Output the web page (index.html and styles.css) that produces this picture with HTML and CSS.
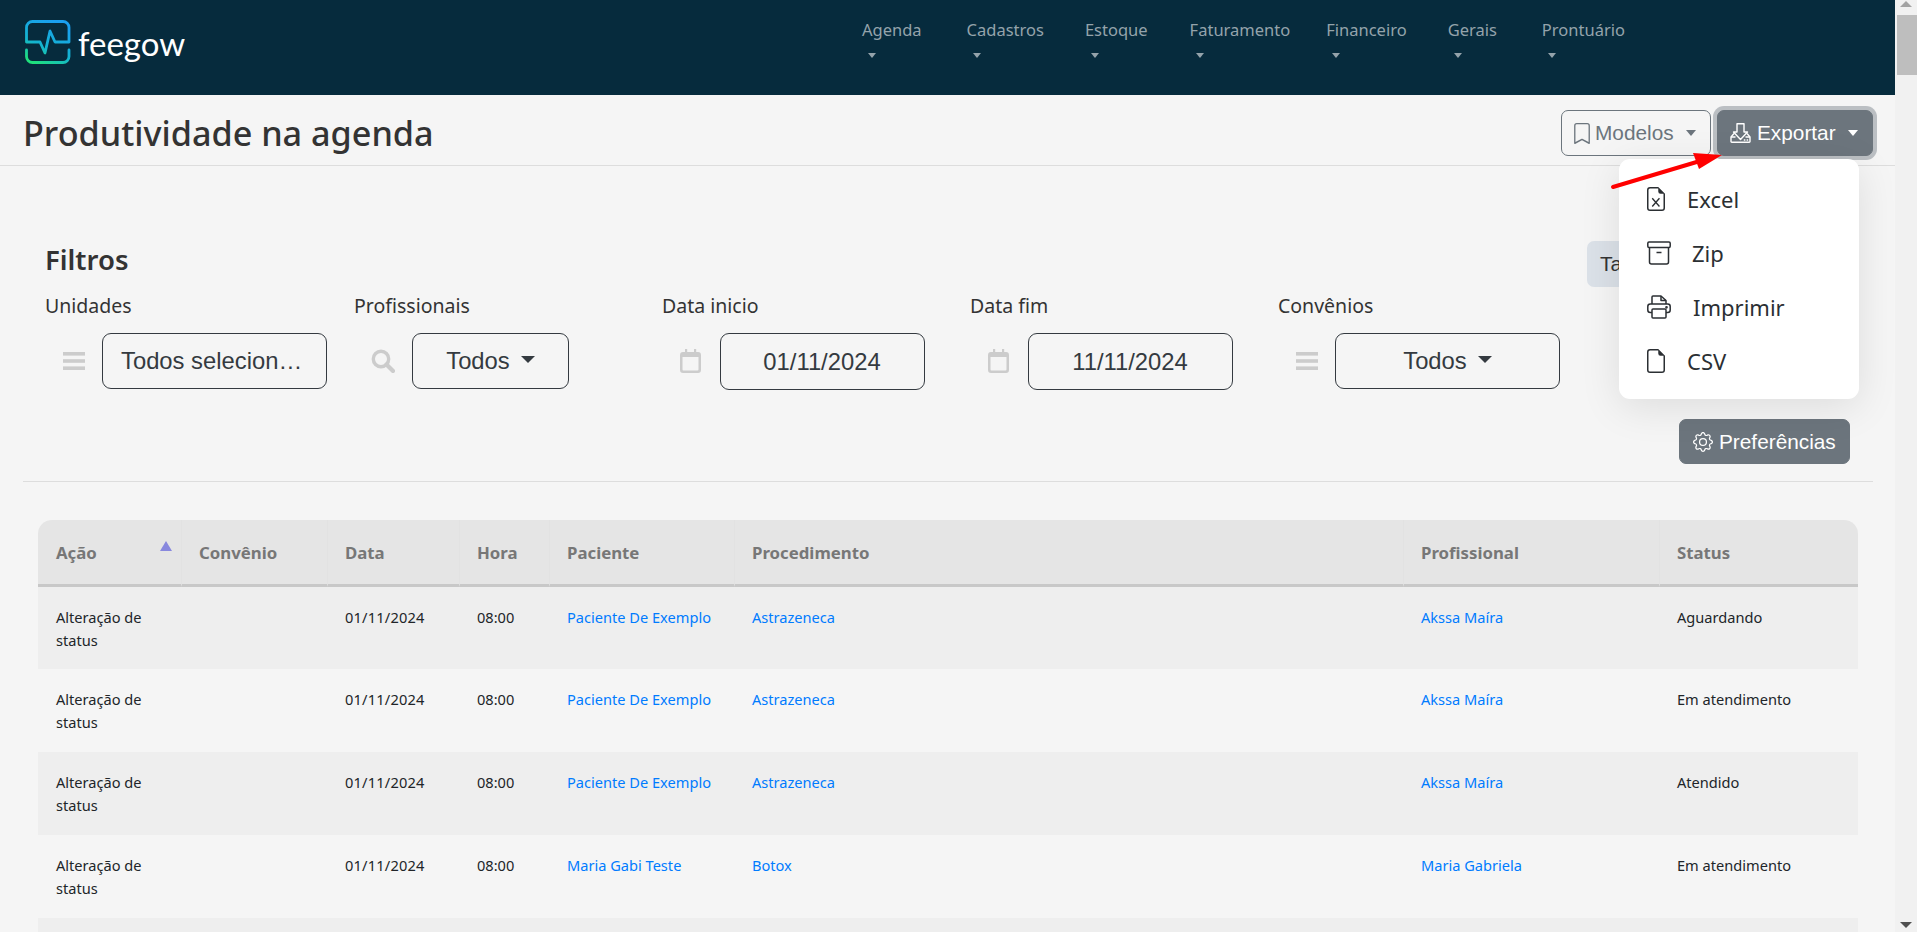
FILE: index.html
```html
<!DOCTYPE html>
<html lang="pt-BR">
<head>
<meta charset="utf-8">
<title>Produtividade na agenda</title>
<link rel="stylesheet" href="styles.css">
</head>
<body>
<div class="page">
  <header class="topbar">
    <a class="logo">
      <svg class="logo-mark" viewBox="0 0 46 44" fill="none" stroke="url(#lg)" stroke-width="2.800" stroke-linecap="round" stroke-linejoin="round">
        <defs><linearGradient id="lg" gradientUnits="userSpaceOnUse" x1="32" y1="2" x2="12" y2="44"><stop offset="0" stop-color="#1a9ff0"/><stop offset=".6" stop-color="#14b4cf"/><stop offset="1" stop-color="#1fe07c"/></linearGradient></defs>
        <path d="M1.500 22V7.500a6 6 0 0 1 6-6H38a6 6 0 0 1 6 6V22H30L25 11 20 33 15 22H1.500z"/>
        <path d="M1.500 30v6.500a6 6 0 0 0 6 6H38a6 6 0 0 0 6-6V30"/>
      </svg>
      <span class="logo-text">feegow</span>
    </a>
    <nav class="nav">
      <a class="nav-item">Agenda<i class="nav-caret"></i></a>
      <a class="nav-item">Cadastros<i class="nav-caret"></i></a>
      <a class="nav-item">Estoque<i class="nav-caret"></i></a>
      <a class="nav-item">Faturamento<i class="nav-caret"></i></a>
      <a class="nav-item">Financeiro<i class="nav-caret"></i></a>
      <a class="nav-item">Gerais<i class="nav-caret"></i></a>
      <a class="nav-item">Prontuário<i class="nav-caret"></i></a>
    </nav>
  </header>

  <section class="title-row">
    <h1 class="title">Produtividade na agenda</h1>
    <div class="actions">
      <button class="btn btn-outline">
        <svg class="ico-book" viewBox="2 0 12 16" fill="currentColor"><path d="M2 2a2 2 0 0 1 2-2h8a2 2 0 0 1 2 2v13.500a.5.5 0 0 1-.777.416L8 13.101l-5.223 2.815A.5.5 0 0 1 2 15.500V2zm2-1a1 1 0 0 0-1 1v12.566l4.723-2.482a.5.5 0 0 1 .554 0L13 14.566V2a1 1 0 0 0-1-1H4z"/></svg>
        Modelos<i class="caret caret-gap"></i>
      </button>
      <div class="export">
        <button class="btn btn-solid btn-focus">
          <svg class="ico-export" viewBox="0 0 21 20" fill="none" stroke="currentColor" stroke-width="1.400" stroke-linejoin="round"><path d="M7 .8h7V9h3.500l-7 7.500-7-7.500H7z"/><path d="M4 10.500L1 14v4.400a.8.8 0 0 0 .8.8h17.400a.8.8 0 0 0 .8-.8V14l-3-3.500"/><path d="M1 14h4.500M15.500 14H20"/><path d="M13.800 17h1.600M16.600 17h1.600"/></svg>
          Exportar<i class="caret caret-gap"></i>
        </button>
        <ul class="menu">
          <li class="menu-item">
            <svg class="ico-file" viewBox="2 0 12 16" fill="currentColor"><path d="M14 4.500V14a2 2 0 0 1-2 2H4a2 2 0 0 1-2-2V2a2 2 0 0 1 2-2h5.500L14 4.500zm-3 0A1.500 1.500 0 0 1 9.500 3V1H4a1 1 0 0 0-1 1v12a1 1 0 0 0 1 1h8a1 1 0 0 0 1-1V4.500h-2z"/><path d="M5.500 7.500l4.800 5.500M10.300 7.500l-4.800 5.500" stroke="currentColor" stroke-width=".9" fill="none"/></svg>
            <span class="menu-label lbl-excel">Excel</span>
          </li>
          <li class="menu-item">
            <svg class="ico-wide" viewBox="0 0 24 24" fill="none" stroke="currentColor" stroke-width="1.500"><rect x=".8" y="1" width="22.400" height="5.500" rx="1.200"/><path d="M2.500 6.500V21a2 2 0 0 0 2 2h15a2 2 0 0 0 2-2V6.500"/><path d="M9.500 11.500h5"/></svg>
            <span class="menu-label lbl-zip">Zip</span>
          </li>
          <li class="menu-item">
            <svg class="ico-wide" viewBox="0 0 24 24" fill="none" stroke="currentColor" stroke-width="1.500" stroke-linejoin="round"><path d="M5 9V2a1 1 0 0 1 1-1h8l5 4.500V9"/><path d="M14 1v4.500h5"/><rect x=".8" y="9" width="22.400" height="8.500" rx="2.500"/><rect x="5" y="14" width="14" height="9" rx="1" fill="#fff"/><circle cx="19.500" cy="12.300" r=".6"/></svg>
            <span class="menu-label lbl-print">Imprimir</span>
          </li>
          <li class="menu-item">
            <svg class="ico-file" viewBox="2 0 12 16" fill="currentColor"><path d="M14 4.500V14a2 2 0 0 1-2 2H4a2 2 0 0 1-2-2V2a2 2 0 0 1 2-2h5.500L14 4.500zm-3 0A1.500 1.500 0 0 1 9.500 3V1H4a1 1 0 0 0-1 1v12a1 1 0 0 0 1 1h8a1 1 0 0 0 1-1V4.500h-2z"/></svg>
            <span class="menu-label lbl-excel">CSV</span>
          </li>
        </ul>
      </div>
    </div>
  </section>

  <section class="filters">
    <div class="filters-head">
      <h2 class="filters-title">Filtros</h2>
      <button class="btn-soft">Tabela</button>
    </div>
    <div class="filter-grid">
      <div class="filter">
        <label class="filter-label">Unidades</label>
        <div class="filter-control">
          <span class="filter-icon"><svg class="ico-bars" viewBox="0 0 22 18" fill="currentColor"><rect width="22" height="3.600"/><rect y="7.200" width="22" height="3.600"/><rect y="14.400" width="22" height="3.600"/></svg></span>
          <div class="field field-lg field-start">Todos selecion…</div>
        </div>
      </div>
      <div class="filter">
        <label class="filter-label">Profissionais</label>
        <div class="filter-control">
          <span class="filter-icon"><svg class="ico-search" viewBox="0 0 24 24" fill="none" stroke="currentColor"><circle cx="10" cy="10" r="7.700" stroke-width="3.400"/><path d="M15.500 15.500l6.500 6.500" stroke-width="4.200" stroke-linecap="round"/></svg></span>
          <div class="field field-sm">Todos<i class="caret caret-lg"></i></div>
        </div>
      </div>
      <div class="filter filter-date">
        <label class="filter-label">Data inicio</label>
        <div class="filter-control">
          <span class="filter-icon"><svg class="ico-cal" viewBox="0 0 21 24" fill="currentColor"><path d="M5 0h2.200v3H14V0h2.200v3H18a3 3 0 0 1 3 3v15a3 3 0 0 1-3 3H3a3 3 0 0 1-3-3V6a3 3 0 0 1 3-3h2zM2.500 8v12.500a1 1 0 0 0 1 1h14a1 1 0 0 0 1-1V8z"/></svg></span>
          <div class="field field-md">01/11/2024</div>
        </div>
      </div>
      <div class="filter filter-date">
        <label class="filter-label">Data fim</label>
        <div class="filter-control">
          <span class="filter-icon"><svg class="ico-cal" viewBox="0 0 21 24" fill="currentColor"><path d="M5 0h2.200v3H14V0h2.200v3H18a3 3 0 0 1 3 3v15a3 3 0 0 1-3 3H3a3 3 0 0 1-3-3V6a3 3 0 0 1 3-3h2zM2.500 8v12.500a1 1 0 0 0 1 1h14a1 1 0 0 0 1-1V8z"/></svg></span>
          <div class="field field-md">11/11/2024</div>
        </div>
      </div>
      <div class="filter">
        <label class="filter-label">Convênios</label>
        <div class="filter-control">
          <span class="filter-icon"><svg class="ico-bars" viewBox="0 0 22 18" fill="currentColor"><rect width="22" height="3.600"/><rect y="7.200" width="22" height="3.600"/><rect y="14.400" width="22" height="3.600"/></svg></span>
          <div class="field field-lg">Todos<i class="caret caret-lg"></i></div>
        </div>
      </div>
    </div>
    <div class="prefs-row">
      <button class="btn btn-solid btn-prefs">
        <svg class="ico-gear" viewBox="0 0 16 16" fill="currentColor"><path d="M8 4.754a3.246 3.246 0 1 0 0 6.492 3.246 3.246 0 0 0 0-6.492zM5.754 8a2.246 2.246 0 1 1 4.492 0 2.246 2.246 0 0 1-4.492 0z"/><path d="M9.796 1.343c-.527-1.790-3.065-1.790-3.592 0l-.094.319a.873.873 0 0 1-1.255.52l-.292-.16c-1.640-.892-3.433.902-2.540 2.541l.159.292a.873.873 0 0 1-.52 1.255l-.319.094c-1.790.527-1.790 3.065 0 3.592l.319.094a.873.873 0 0 1 .52 1.255l-.16.292c-.892 1.640.901 3.434 2.541 2.540l.292-.159a.873.873 0 0 1 1.255.52l.094.319c.527 1.790 3.065 1.790 3.592 0l.094-.319a.873.873 0 0 1 1.255-.52l.292.16c1.640.893 3.434-.902 2.540-2.541l-.159-.292a.873.873 0 0 1 .52-1.255l.319-.094c1.790-.527 1.790-3.065 0-3.592l-.319-.094a.873.873 0 0 1-.52-1.255l.16-.292c.893-1.640-.902-3.433-2.541-2.540l-.292.159a.873.873 0 0 1-1.255-.52l-.094-.319zm-2.633.283c.246-.835 1.428-.835 1.674 0l.094.319a1.873 1.873 0 0 0 2.693 1.115l.291-.16c.764-.415 1.600.42 1.184 1.185l-.159.292a1.873 1.873 0 0 0 1.116 2.692l.318.094c.835.246.835 1.428 0 1.674l-.319.094a1.873 1.873 0 0 0-1.115 2.693l.16.291c.415.764-.42 1.600-1.185 1.184l-.291-.159a1.873 1.873 0 0 0-2.693 1.116l-.094.318c-.246.835-1.428.835-1.674 0l-.094-.319a1.873 1.873 0 0 0-2.692-1.115l-.292.16c-.764.415-1.600-.42-1.184-1.185l.159-.291A1.873 1.873 0 0 0 1.945 8.930l-.319-.094c-.835-.246-.835-1.428 0-1.674l.319-.094A1.873 1.873 0 0 0 3.060 4.377l-.16-.292c-.415-.764.42-1.600 1.185-1.184l.292.159a1.873 1.873 0 0 0 2.692-1.115l.094-.319z"/></svg>
        Preferências
      </button>
    </div>
  </section>

  <hr class="divider">

  <table class="report">
    <colgroup>
      <col class="c1"><col class="c2"><col class="c3"><col class="c4"><col class="c5"><col class="c6"><col class="c7"><col class="c8">
    </colgroup>
    <thead>
      <tr>
        <th class="sorted">Ação<i class="sort-arrow"></i></th>
        <th>Convênio</th><th>Data</th><th>Hora</th><th>Paciente</th><th>Procedimento</th><th>Profissional</th><th>Status</th>
      </tr>
    </thead>
    <tbody>
      <tr class="first">
        <td class="wrap">Alteração de status</td><td></td><td class="date">01/11/2024</td><td>08:00</td>
        <td><a>Paciente De Exemplo</a></td><td><a>Astrazeneca</a></td><td><a>Akssa Maíra</a></td><td>Aguardando</td>
      </tr>
      <tr>
        <td class="wrap">Alteração de status</td><td></td><td class="date">01/11/2024</td><td>08:00</td>
        <td><a>Paciente De Exemplo</a></td><td><a>Astrazeneca</a></td><td><a>Akssa Maíra</a></td><td>Em atendimento</td>
      </tr>
      <tr>
        <td class="wrap">Alteração de status</td><td></td><td class="date">01/11/2024</td><td>08:00</td>
        <td><a>Paciente De Exemplo</a></td><td><a>Astrazeneca</a></td><td><a>Akssa Maíra</a></td><td>Atendido</td>
      </tr>
      <tr>
        <td class="wrap">Alteração de status</td><td></td><td class="date">01/11/2024</td><td>08:00</td>
        <td><a>Maria Gabi Teste</a></td><td><a>Botox</a></td><td><a>Maria Gabriela</a></td><td>Em atendimento</td>
      </tr>
      <tr><td colspan="8"></td></tr>
    </tbody>
  </table>
</div>

<aside class="scrollbar">
  <i class="sb-up"></i>
  <i class="sb-thumb"></i>
  <i class="sb-down"></i>
</aside>

<svg class="red-arrow" viewBox="0 0 120 45">
  <path d="M3 36L90 10" stroke="#f00" stroke-width="4" stroke-linecap="round"/>
  <path d="M112 4L83 2l6 16z" fill="#f00"/>
</svg>
</body>
</html>
```

FILE: styles.css
```css
* { box-sizing: border-box; }
html, body { height: 100%; }
body {
  margin: 0;
  display: flex;
  overflow: hidden;
  position: relative;
  background: #f5f5f5;
  color: #333;
  font-family: "Noto Sans", "Open Sans", sans-serif;
}
.page { flex: 1; min-width: 0; height: 100vh; overflow: hidden; }

/* top bar */
.topbar {
  height: 95px;
  background: #062b3d;
  display: flex;
  align-items: flex-start;
  padding-left: 25px;
}
.logo { display: flex; align-items: flex-start; width: 161px; padding-top: 20px; }
.logo-mark { width: 46px; height: 44px; flex: none; }
.logo-text {
  font-family: "Lato", sans-serif;
  font-weight: 400;
  font-size: 33px;
  line-height: 44px;
  color: #fff;
  margin: 1px 0 0 7px;
}
.nav { display: flex; gap: 42px; margin-left: 676px; padding-top: 17px; }
.nav-item {
  display: flex;
  flex-direction: column;
  align-items: flex-start;
  font-size: 16.500px;
  line-height: 26px;
  color: #94a3ab;
}
.nav-item:nth-child(2) { margin-left: 3px; }
.nav-item:nth-child(3) { margin-left: -1px; }
.nav-item:nth-child(5) { margin-left: -6px; }
.nav-item:nth-child(6) { margin-left: -1px; }
.nav-item:nth-child(7) { margin-left: 3px; }
.nav-caret {
  margin: 10px 0 0 6px;
  width: 0;
  height: 0;
  border-left: 4.500px solid transparent;
  border-right: 4.500px solid transparent;
  border-top: 5.500px solid #94a3ab;
}

/* title */
.title-row {
  height: 71px;
  border-bottom: 1px solid #ddd;
  display: flex;
  align-items: center;
  justify-content: space-between;
  padding: 0 22px 0 23px;
}
.title { margin: 6px 0 0; font-size: 34.200px; font-weight: 500; line-height: 44px; color: #333; }
.actions { display: flex; gap: 6px; align-items: flex-start; margin-top: 6px; }

/* buttons */
.btn {
  height: 46px;
  border-radius: 7px;
  font-family: "Liberation Sans", Arial, sans-serif;
  font-size: 20.800px;
  display: flex;
  align-items: center;
  white-space: nowrap;
  padding: 0;
}
.btn-outline { width: 150px; background: transparent; border: 1px solid #6c757d; color: #6c757d; padding-left: 12px; }
.btn-solid { background: #6c757d; border: 1px solid #6c757d; color: #fff; }
.btn-focus { width: 156px; padding-left: 12px; box-shadow: 0 0 0 4px rgba(130, 138, 145, .5); }
.btn-prefs { width: 171px; height: 45px; padding-left: 13px; }
.btn-soft {
  height: 46px;
  width: 200px;
  border: 0;
  border-radius: 7px;
  background: #dbe1e8;
  color: #333;
  font-family: "Liberation Sans", Arial, sans-serif;
  font-size: 20.800px;
  text-align: left;
  padding-left: 13px;
}
.ico-book { width: 16px; height: 21px; margin-right: 5px; flex: none; }
.ico-export { width: 21px; height: 20px; margin-right: 6px; flex: none; }
.ico-gear { width: 20px; height: 20px; margin-right: 6px; flex: none; }
.caret {
  display: inline-block;
  width: 0;
  height: 0;
  border-left: 5.500px solid transparent;
  border-right: 5.500px solid transparent;
  border-top: 6px solid currentColor;
}
.caret-gap { margin: 0 0 1px 12px; }
.caret-lg {
  margin: 0 0 3px 11px;
  border-left-width: 7px;
  border-right-width: 7px;
  border-top-width: 7px;
}

/* dropdown */
.export { position: relative; }
.menu {
  position: absolute;
  top: 49px;
  right: 14px;
  width: 240px;
  height: 240px;
  margin: 0;
  padding: 13px 0 0 28px;
  list-style: none;
  background: #fff;
  border-radius: 11px;
  box-shadow: 0 8px 40px rgba(0, 0, 0, .1);
  z-index: 2;
}
.menu-item { display: flex; align-items: center; height: 54px; color: #2b2f33; }
.menu-label { font-size: 22px; line-height: 30px; }
.ico-file { width: 18px; height: 24px; flex: none; }
.ico-wide { width: 24px; height: 24px; flex: none; }
.lbl-excel { margin-left: 22px; }
.lbl-zip { margin-left: 21px; }
.lbl-print { margin-left: 22px; }

/* filters */
.filters { padding: 75px 0 0 45px; }
.filters-head { display: flex; justify-content: space-between; align-items: flex-start; padding-right: 108px; height: 46px; }
.filters-title { margin: 1px 0 0; font-size: 27.500px; line-height: 36px; font-weight: 600; color: #333; }
.filter-grid { display: grid; grid-template-columns: 309px repeat(4, 308px); margin-top: 5px; }
.filter-label { display: block; font-size: 19.500px; line-height: 27px; color: #333; }
.filter-control { display: flex; margin-top: 14px; }
.filter-icon { width: 58px; height: 56px; padding-left: 18px; display: flex; align-items: center; color: #ccc; flex: none; }
.filter:first-child .filter-icon, .filter:last-child .filter-icon { width: 57px; }
.filter-date .filter-icon { width: 57.500px; }
.ico-bars { width: 22px; height: 18px; }
.ico-search { width: 24px; height: 24px; margin-left: -1px; }
.ico-cal { width: 21px; height: 24px; }
.field {
  height: 56px;
  border: 1px solid #343a40;
  border-radius: 9px;
  display: flex;
  align-items: center;
  justify-content: center;
  font-family: "Liberation Sans", Arial, sans-serif;
  font-size: 23.800px;
  color: #343a40;
  white-space: nowrap;
}
.field-lg { width: 225px; }
.field-start { justify-content: flex-start; padding-left: 18px; }
.field-md { width: 205px; height: 57px; }
.field-sm { width: 157px; }

.prefs-row { display: flex; justify-content: flex-end; margin-top: 29px; padding-right: 45px; }

.divider { margin: 17px 22px 0 23px; border: 0; border-top: 1px solid #ddd; height: 0; }

/* table */
.report {
  width: 1820px;
  margin: 38px 0 0 38px;
  table-layout: fixed;
  border-collapse: separate;
  border-spacing: 0;
}
.c1 { width: 143px; } .c2 { width: 146px; } .c3 { width: 132px; } .c4 { width: 90px; }
.c5 { width: 185px; } .c6 { width: 669px; } .c7 { width: 256px; } .c8 { width: 199px; }
.report th {
  height: 67px;
  padding: 0 0 0 17px;
  background: #e5e5e5;
  border-bottom: 3px solid #c8c8c8;
  border-left: 1px solid #e2e2e2;
  font-size: 16.800px;
  font-weight: 700;
  color: #777;
  text-align: left;
}
.report th:first-child { border-left: 0; border-top-left-radius: 14px; padding-left: 18px; }
.report th:last-child { border-top-right-radius: 14px; }
.sorted { position: relative; }
.sort-arrow {
  position: absolute;
  top: 21px;
  right: 9px;
  width: 0;
  height: 0;
  border-left: 6px solid transparent;
  border-right: 6px solid transparent;
  border-bottom: 10px solid #8888de;
}
.report td {
  height: 83px;
  padding: 19px 0 0 18px;
  vertical-align: top;
  font-size: 14.600px;
  line-height: 23.200px;
  color: #212529;
}
.report .first td { height: 82px; }
.report tbody tr:nth-child(odd) td { background: #eee; }
.report a { color: #007bff; }
.report .wrap { padding-right: 24px; }
.report .date { letter-spacing: .2px; }

/* scrollbar */
.scrollbar {
  width: 22px;
  flex: none;
  height: 100vh;
  background: #f1f1f1;
  display: flex;
  flex-direction: column;
  align-items: center;
}
.sb-up {
  margin-top: 1px;
  width: 0;
  height: 0;
  border-left: 6px solid transparent;
  border-right: 6px solid transparent;
  border-bottom: 6px solid #a3a3a3;
}
.sb-thumb { width: 20px; height: 60px; margin: 8px 0 0 2px; background: #bebebe; }
.sb-down {
  margin-top: auto;
  margin-bottom: 4px;
  width: 0;
  height: 0;
  border-left: 6px solid transparent;
  border-right: 6px solid transparent;
  border-top: 6px solid #505050;
}

/* annotation */
.red-arrow { position: absolute; left: 1610px; top: 151px; width: 120px; height: 45px; z-index: 3; }
```
